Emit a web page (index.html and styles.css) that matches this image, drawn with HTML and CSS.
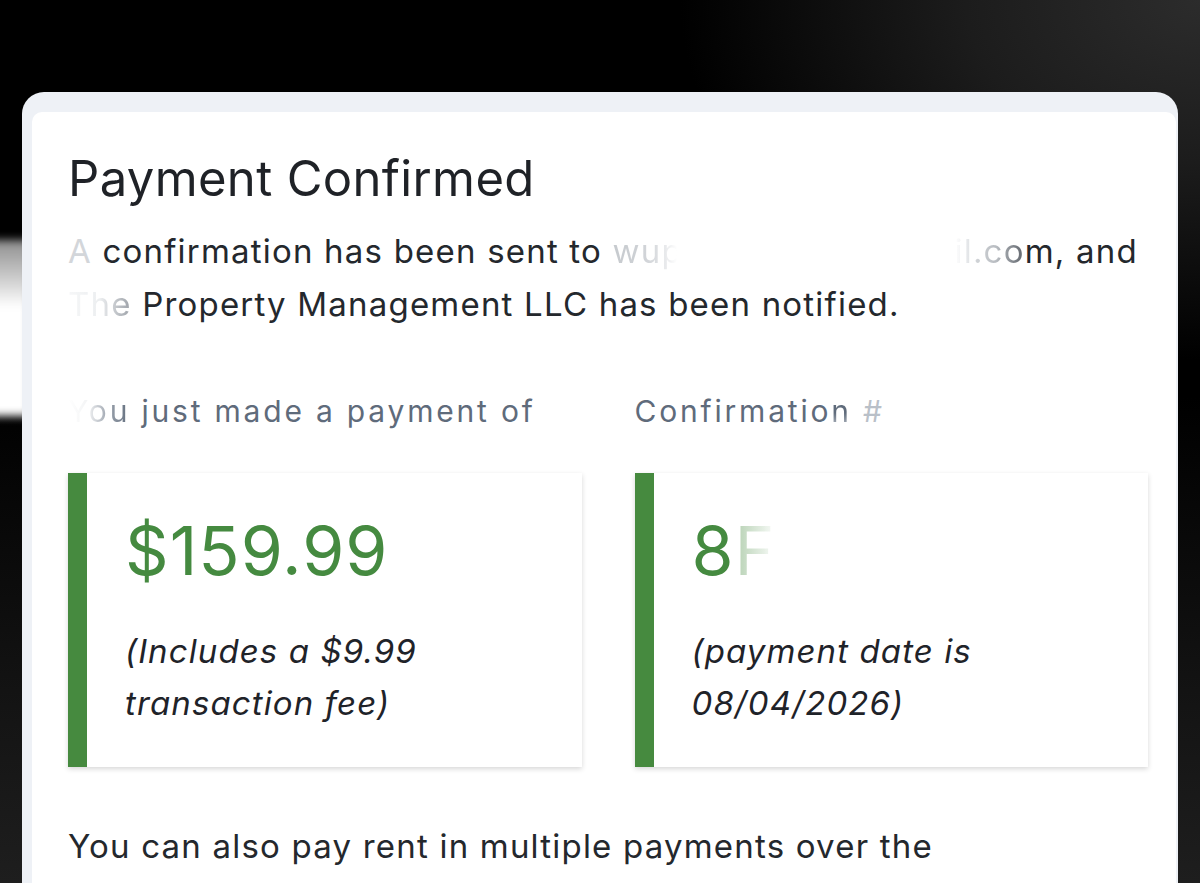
FILE: index.html
```html
<!DOCTYPE html>
<html lang="en">
<head>
<meta charset="utf-8">
<title>Payment Confirmed</title>
<link rel="stylesheet" href="styles.css">
</head>
<body>
<div class="glare"></div>
<div class="stage">
  <div class="card">
    <div class="card-inner">
      <h1 class="title">Payment Confirmed</h1>
      <p class="lead"><span class="faint">A</span> confirmation has been sent to <span class="redact">wupaulmx@gma</span><span class="fade-il">il</span><span class="fade-com">.co</span>m, and<br><span class="fade-name">The</span> Property Management LLC has been notified.</p>

      <div class="summary">
        <div class="col">
          <div class="label"><span class="fade-you">You</span> just made a payment of</div>
          <div class="box">
            <div class="big">$159.99</div>
            <div class="note">(Includes a $9.99<br>transaction fee)</div>
          </div>
        </div>
        <div class="col">
          <div class="label">Confirmatio<span class="fade-n">n</span> <span class="faint-hash">#</span></div>
          <div class="box">
            <div class="big">8<span class="fade-code">F3K9Q2</span></div>
            <div class="note">(payment date is<br>08/04/2026)</div>
          </div>
        </div>
      </div>

      <p class="tail">You can also pay rent in multiple payments over the</p>
    </div>
  </div>
</div>
</body>
</html>
```
FILE: styles.css
```css
* { box-sizing: border-box; }

html, body {
  margin: 0;
  height: 883px;
  overflow: hidden;
}

body {
  position: relative;
  font-family: "Inter", "Noto Sans", "Liberation Sans", sans-serif;
  background:
    radial-gradient(ellipse 520px 360px at 100% 0%, #2c2c2c 0%, #1c1c1c 45%, rgba(0,0,0,0) 100%),
    linear-gradient(180deg, #000 0%, #000 45%, #141414 80%, #1e1e1e 100%);
  background-color: #000;
}

.glare {
  position: absolute;
  left: -14px;
  top: 240px;
  width: 44px;
  height: 176px;
  background: linear-gradient(180deg, #8e8e8e 0%, #d6d6d6 25%, #fff 38%, #fff 100%);
  filter: blur(4px);
}

.stage {
  position: relative;
  padding: 92px 22px 0 22px;
}

.card {
  background: #eef1f6;
  border-radius: 22px 22px 0 0;
  padding: 20px 2px 0 10px;
  height: 900px;
}

.card-inner {
  background: #fff;
  border-radius: 10px 10px 0 0;
  padding: 37px 28px 0 36px;
  height: 100%;
}

.title {
  margin: 0;
  font-size: 49px;
  line-height: 59px;
  font-weight: 400;
  color: #1f2227;
  letter-spacing: 0.35px;
}

.lead {
  margin: 17px 0 0 0;
  font-size: 33px;
  line-height: 53px;
  letter-spacing: 1.2px;
  color: #24282d;
  white-space: nowrap;
}

.faint { color: #d3d6da; }

.redact {
  display: inline-block;
  vertical-align: top;
  width: 342px;
  white-space: nowrap;
  background: linear-gradient(90deg, #c6cace 0px, #cfd2d6 30px, #dfe1e4 48px, rgba(255,255,255,0) 64px);
  -webkit-background-clip: text;
  background-clip: text;
  color: transparent;
}

.fade-il {
  background: linear-gradient(90deg, rgba(255,255,255,0) 0%, #f0f1f3 40%, #dadde0 100%);
  -webkit-background-clip: text;
  background-clip: text;
  color: transparent;
}

.fade-com {
  background: linear-gradient(90deg, #d4d7da 0%, #b8bcc1 45%, #5c6168 100%);
  -webkit-background-clip: text;
  background-clip: text;
  color: transparent;
}

.fade-name {
  background: linear-gradient(90deg, #f6f7f8 0%, #eceef0 50%, #9a9fa6 100%);
  -webkit-background-clip: text;
  background-clip: text;
  color: transparent;
}

.summary {
  margin-top: 60px;
  display: grid;
  grid-template-columns: 1fr 1fr;
  column-gap: 53px;
}

.label {
  font-size: 30px;
  line-height: 40px;
  letter-spacing: 2.8px;
  color: #5f6b7b;
  white-space: nowrap;
}

.fade-you {
  background: linear-gradient(90deg, #ffffff 0%, #f3f4f5 32%, #a2a9b3 62%, #5f6b7b 100%);
  -webkit-background-clip: text;
  background-clip: text;
  color: transparent;
}

.fade-n {
  background: linear-gradient(180deg, #5f6b7b 0%, #5f6b7b 55%, #c5cad1 100%);
  -webkit-background-clip: text;
  background-clip: text;
  color: transparent;
}

.faint-hash { color: #b9c0c8; }

.box {
  margin-top: 42px;
  background: #fff;
  border-left: 19px solid #468a3f;
  box-shadow: 0 2px 5px rgba(0, 0, 0, 0.16);
  padding: 37px 20px 38px 38px;
}

.big {
  font-size: 68px;
  line-height: 80px;
  letter-spacing: 1px;
  color: #458a40;
  white-space: nowrap;
}

.fade-code {
  background: linear-gradient(90deg, #b5d0b2 0px, #e4eee3 28px, rgba(255,255,255,0) 42px);
  -webkit-background-clip: text;
  background-clip: text;
  color: transparent;
}

.note {
  margin-top: 35px;
  font-size: 33px;
  line-height: 52px;
  letter-spacing: 1.1px;
  font-style: italic;
  color: #1f2329;
  white-space: nowrap;
}

.tail {
  margin: 53px 0 0 0;
  font-size: 33px;
  line-height: 53px;
  letter-spacing: 1.2px;
  color: #24282d;
  white-space: nowrap;
}
```
